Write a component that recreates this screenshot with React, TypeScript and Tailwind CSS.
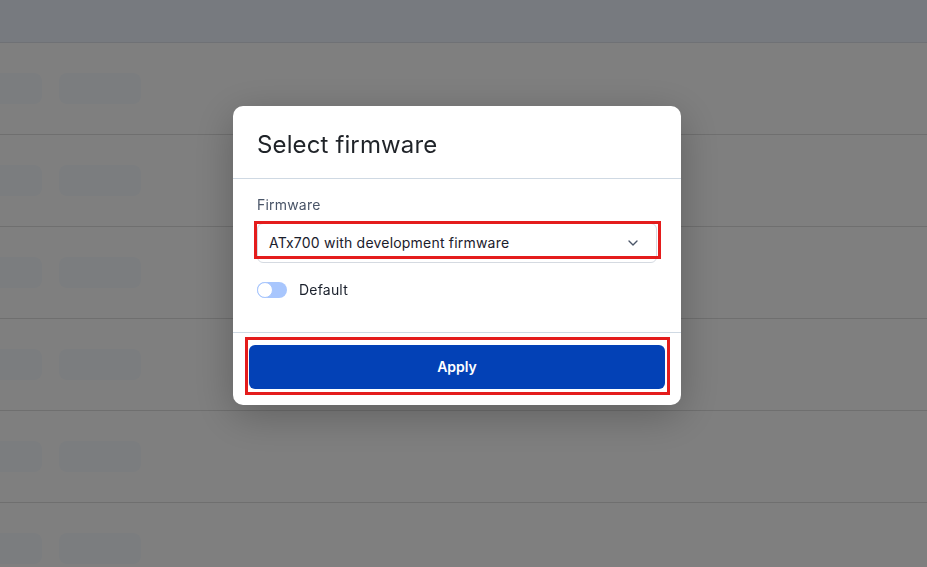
import { ChevronDown } from 'lucide-react'

const rows = [0, 1, 2, 3, 4, 5]

function BackgroundTable() {
  return (
    <div className="min-h-screen bg-white">
      <div className="h-[43px] border-b border-[#dfe3ea] bg-[#eef4ff]" />
      {rows.map((row) => (
        <div key={row} className="flex h-[92px] items-center gap-[17px] border-b border-[#dedede]">
          <div className="-ml-[40px] h-[31px] w-[82px] rounded-lg bg-[#f6faff]" />
          <div className="h-[31px] w-[82px] rounded-lg bg-[#f6faff]" />
        </div>
      ))}
    </div>
  )
}

function Toggle() {
  return (
    <div className="relative h-4 w-[30px] rounded-full bg-[#a8c6fd]">
      <div className="absolute left-0 top-0 h-4 w-4 rounded-full border border-[#a8c6fd] bg-white" />
    </div>
  )
}

export default function App() {
  return (
    <div className="relative font-['Inter',sans-serif]">
      <BackgroundTable />

      <div className="fixed inset-0 bg-black/50">
        <div className="ml-[233px] mt-[106px] w-[448px] overflow-hidden rounded-[10px] bg-white shadow-[0_10px_40px_rgba(0,0,0,0.25)]">
          <div className="border-b border-[#cfd9e3] px-6 pb-[17px] pt-[23px]">
            <h2 className="text-2xl leading-8 font-normal tracking-[0.13px] text-[#1f2328]">Select firmware</h2>
          </div>

          <div className="px-6 pb-[31px] pt-4">
            <label className="block text-sm leading-5 tracking-[0.2px] text-[#4a5568]">Firmware</label>
            <div className="relative mt-2 w-[400px]">
              <div className="flex h-10 items-center justify-between rounded-md border border-[#d5dae1] bg-white pl-[11px] pr-[15px]">
                <span className="text-sm tracking-[0.2px] text-[#1a202c]">ATx700 with development firmware</span>
                <ChevronDown size={16} strokeWidth={2} className="text-[#4a5568]" />
              </div>
              <div className="pointer-events-none absolute -left-[3px] -top-[2px] h-[38px] w-[407px] border-[3px] border-[#e41c1c]" />
            </div>

            <div className="mt-4 flex h-[22px] items-center gap-3">
              <Toggle />
              <span className="text-sm tracking-[0.2px] text-[#1a202c]">Default</span>
            </div>
          </div>

          <div className="relative border-t border-[#cfd9e3] px-4 pb-4 pt-3">
            <button className="flex h-11 w-full items-center justify-center rounded-md bg-[#0341b6] text-sm font-semibold text-white">
              Apply
            </button>
            <div className="pointer-events-none absolute left-[12px] top-[4px] h-[58px] w-[425px] border-[3px] border-[#e41c1c]" />
          </div>
        </div>
      </div>
    </div>
  )
}
